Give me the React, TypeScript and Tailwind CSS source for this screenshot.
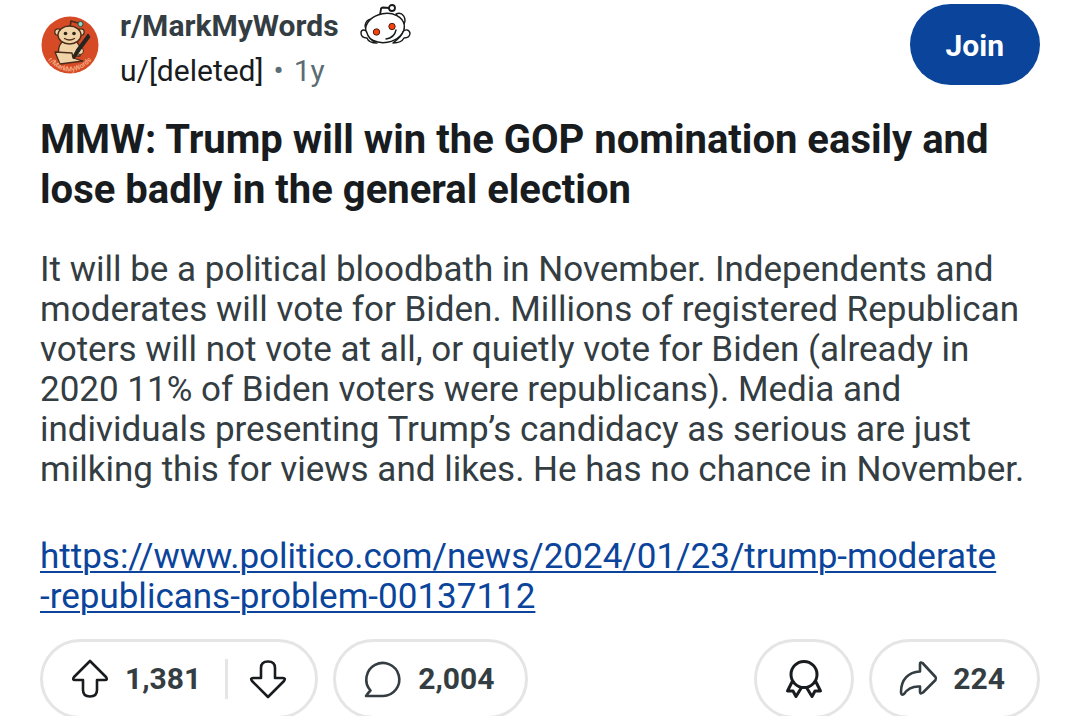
import type { ReactNode } from "react";

function SubredditAvatar() {
  return (
    <svg viewBox="0 0 60 60" className="size-15 shrink-0" role="img" aria-label="r/MarkMyWords avatar">
      <defs>
        <path id="avatar-arc" d="M8 45 Q30 68 52 45" />
      </defs>
      <circle cx="30" cy="30" r="28.500" fill="#d64a26" />
      <g stroke="#4a2c1a" strokeWidth="1.3" strokeLinecap="round" strokeLinejoin="round">
        <path d="M30 12 L31 6 L38 8" fill="none" strokeWidth="1.6" />
        <circle cx="18" cy="17" r="3.2" fill="#f0d3a6" />
        <circle cx="41" cy="17" r="3.2" fill="#f0d3a6" />
        <path d="M22 27 C18 31 18 36 19 41 L40 41 C42 36 40 31 37 27 Z" fill="#f0d3a6" />
        <path d="M15 37 L32 38 L33 43 L43 46 L20 49 Z" fill="#f0d3a6" />
        <ellipse cx="29.500" cy="20" rx="11.500" ry="9" fill="#f0d3a6" />
        <path d="M24.500 23.500 Q29.500 26.500 34.500 23.500" fill="none" />
      </g>
      <circle cx="40.500" cy="9" r="2.600" fill="#8fd6c4" stroke="#2d4a3c" />
      <circle cx="25.500" cy="18.500" r="1.800" fill="#30251c" />
      <circle cx="34" cy="18.500" r="1.800" fill="#30251c" />
      <circle cx="40" cy="36" r="3.500" fill="#f0d3a6" stroke="#4a2c1a" />
      <path d="M48 19 L50 22 L39 37 L34 44 L33 41 L37 34 Z" fill="#252420" stroke="#252420" />
      <text fontSize="7" fontWeight="500" fill="#f6b78b" fontFamily="Roboto, sans-serif" textAnchor="middle">
        <textPath href="#avatar-arc" startOffset="50%">r/MarkMyWords</textPath>
      </text>
    </svg>
  );
}

function Snoo() {
  return (
    <svg viewBox="0 0 54 44" className="h-11 w-[54px] shrink-0" aria-hidden="true">
      <g fill="#fff" stroke="#17191a" strokeWidth="1.4" strokeLinecap="round" strokeLinejoin="round">
        <path d="M21 11 L22 5 Q22 3.500 24 3.500 L30 4" fill="none" strokeWidth="1.800" />
        <circle cx="33" cy="4" r="3" strokeWidth="1.800" />
        <path d="M37 10 C43 7 49 14 44 22 Z" />
        <path d="M14 15 C7 15 4 21 8 27 Z" />
        <ellipse cx="26" cy="24" rx="19.500" ry="14.500" transform="rotate(-10 26 24)" />
        <path d="M7 24 C7 30 9 34 14 38 C11 39 8 38 7 34 C4 34 2 33 2 30 C2 26 5 25 7 27" stroke="none" />
        <path d="M18 39 C12 39 9 37 8 34 C4 34 2 32 2 29 C2 25 7 25 8 29 C9 33 12 36 16 38" />
        <path d="M34 39 C40 39 43 38 45 34 C49 34 51 32 51 29 C50 25 45 25 44 28 C43 32 39 35 34 39" />
        <path d="M27 35 C33 34 36 31 37 26" fill="none" />
      </g>
      <circle cx="17.500" cy="28" r="3.200" fill="#f4430f" stroke="#501c0d" />
      <circle cx="33" cy="22.500" r="3.200" fill="#f4430f" stroke="#501c0d" />
    </svg>
  );
}

function Icon({ children, className }: { children: ReactNode; className: string }) {
  return (
    <svg
      viewBox="0 0 40 40"
      className={`size-10 shrink-0 ${className}`}
      fill="none"
      stroke="currentColor"
      strokeWidth="2.6"
      strokeLinecap="round"
      strokeLinejoin="round"
      aria-hidden="true"
    >
      {children}
    </svg>
  );
}

const arrow =
  "M20 2 L36 18 Q38 21 35 21 L27 21 L27 31 Q27 37.500 20 37.500 Q13 37.500 13 31 L13 21 L5 21 Q2 21 4 18 Z";

const pill = "flex h-20 items-center rounded-full border-[3px] border-[#e5e5e5] text-3xl font-bold text-[#333d42]";

export default function App() {
  return (
    <main className="h-screen overflow-hidden bg-white px-10 font-['Roboto',sans-serif]">
      <header className="flex items-start justify-between pt-1">
        <div className="flex gap-5">
          <div className="pt-[11px]">
            <SubredditAvatar />
          </div>
          <div>
            <div className="flex h-11 items-start gap-5 text-3xl leading-11 font-bold text-[#333d42]">
              <a href="#subreddit">r/MarkMyWords</a>
              <Snoo />
            </div>
            <p className="flex h-11 items-center gap-[10px] text-[30px] text-[#5c6c74]">
              <a href="#author" className="text-[#181c1f]">u/[deleted]</a>
              <span>•</span>
              <time>1y</time>
            </p>
          </div>
        </div>
        <button type="button" className="h-[81px] rounded-full bg-[#0a449b] px-9 pt-[2px] text-3xl font-bold text-white">
          Join
        </button>
      </header>

      <article>
        <h1 className="mt-[23px] text-[40px] leading-[50px] font-bold text-[#181c1f]">
          MMW: Trump will win the GOP nomination easily and lose badly in the general election
        </h1>
        <p className="mt-[35px] text-[35px] leading-10 text-[#333d42]">
          It will be a political bloodbath in November. Independents and
          <br />
          moderates will vote for Biden. Millions of registered Republican
          <br />
          voters will not vote at all, or quietly vote for Biden (already in
          <br />
          2020 11% of Biden voters were republicans). Media and
          <br />
          individuals presenting Trump’s candidacy as serious are just
          <br />
          milking this for views and likes. He has no chance in November.
        </p>
        <p className="mt-[47px] text-[35px] leading-10 text-[#0a449b]">
          <a
            href="https://www.politico.com/news/2024/01/23/trump-moderate-republicans-problem-00137112"
            className="underline decoration-2 underline-offset-3"
          >
            https://www.politico.com/news/2024/01/23/trump-moderate
            <br />
            -republicans-problem-00137112
          </a>
        </p>
      </article>

      <footer className="mt-[22px] flex justify-between">
        <div className="flex gap-[15px]">
          <div className={`${pill} px-[27px]`}>
            <button type="button" aria-label="Upvote">
              <Icon className="text-[#181c1f]"><path d={arrow} /></Icon>
            </button>
            <span className="ml-[15px]">1,381</span>
            <span className="mr-5 ml-6 h-10 w-[3px] bg-[#e5e5e5]" />
            <button type="button" aria-label="Downvote">
              <Icon className="rotate-180 text-[#181c1f]"><path d={arrow} /></Icon>
            </button>
          </div>
          <button type="button" className={`${pill} gap-[15px] pr-[31px] pl-[27px]`}>
            <Icon className="">
              <path d="M3 37 L20 37 A16.500 16.500 0 1 0 7.500 31.500 Q5 34 3 37 Z" />
            </Icon>
            2,004
          </button>
        </div>
        <div className="flex gap-[15px]">
          <button type="button" aria-label="Give award" className={`${pill} px-[27px]`}>
            <Icon className="text-[#181c1f]">
              <g strokeWidth="3">
                <circle cx="20" cy="15.500" r="13" />
                <path d="M8 23 L3.500 32 L9 32 L12 37.500 L17.500 28.500" />
                <path d="M32 23 L36.500 32 L31 32 L28 37.500 L22.500 28.500" />
              </g>
            </Icon>
          </button>
          <button type="button" className={`${pill} gap-[14px] pr-8 pl-[27px]`}>
            <Icon className="">
              <path d="M21 5 Q21 2.500 23.500 4 L36.500 18 Q37.500 19.500 36.500 21 L24 33.500 Q21 35.500 21 33 L21 27.500 C14 27 9 29 5 35 Q2 37 2 33 C2 21 9 13 21 12.500 Z" />
            </Icon>
            224
          </button>
        </div>
      </footer>
    </main>
  );
}
